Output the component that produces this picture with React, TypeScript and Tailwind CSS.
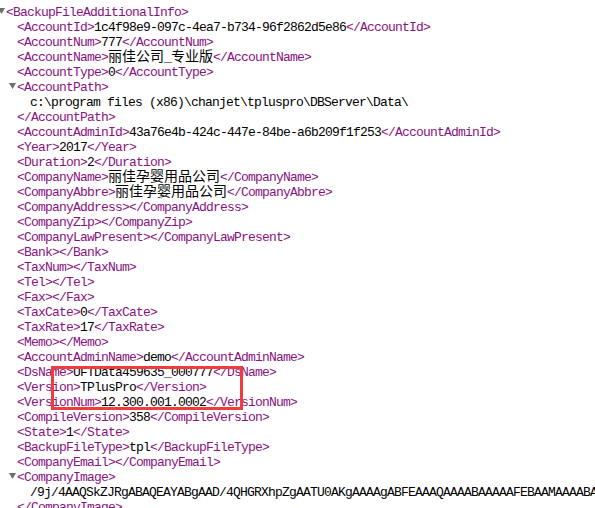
import React from "react";

type Seg = { t: string; k: "tag" | "txt" | "cjk" };
type Line = { indent: number; tri?: boolean; segs: Seg[] };

const tag = (t: string): Seg => ({ t, k: "tag" });
const txt = (t: string): Seg => ({ t, k: "txt" });
const cjk = (t: string): Seg => ({ t, k: "cjk" });

const el = (name: string, ...content: Seg[]): Line => ({
  indent: 17,
  segs: [tag(`<${name}>`), ...content, tag(`</${name}>`)],
});

const lines: Line[] = [
  { indent: 6, tri: true, segs: [tag("<BackupFileAdditionalInfo>")] },
  el("AccountId", txt("1c4f98e9-097c-4ea7-b734-96f2862d5e86")),
  el("AccountNum", txt("777")),
  el("AccountName", cjk("丽佳公司"), txt("_"), cjk("专业版")),
  el("AccountType", txt("0")),
  { indent: 17, tri: true, segs: [tag("<AccountPath>")] },
  { indent: 30, segs: [txt("c:\\program files (x86)\\chanjet\\tpluspro\\DBServer\\Data\\")] },
  { indent: 17, segs: [tag("</AccountPath>")] },
  el("AccountAdminId", txt("43a76e4b-424c-447e-84be-a6b209f1f253")),
  el("Year", txt("2017")),
  el("Duration", txt("2")),
  el("CompanyName", cjk("丽佳孕婴用品公司")),
  el("CompanyAbbre", cjk("丽佳孕婴用品公司")),
  el("CompanyAddress"),
  el("CompanyZip"),
  el("CompanyLawPresent"),
  el("Bank"),
  el("TaxNum"),
  el("Tel"),
  el("Fax"),
  el("TaxCate", txt("0")),
  el("TaxRate", txt("17")),
  el("Memo"),
  el("AccountAdminName", txt("demo")),
  el("DsName", txt("UFTData459635_000777")),
  el("Version", txt("TPlusPro")),
  el("VersionNum", txt("12.300.001.0002")),
  el("CompileVersion", txt("358")),
  el("State", txt("1")),
  el("BackupFileType", txt("tpl")),
  el("CompanyEmail"),
  { indent: 17, tri: true, segs: [tag("<CompanyImage>")] },
  {
    indent: 30,
    segs: [
      txt(
        "/9j/4AAQSkZJRgABAQEAYABgAAD/4QHGRXhpZgAATU0AKgAAAAgABFEAAAQAAAABAAAAAFEBAAMAAAABAAEAAFECAAEAAAGAAAAASlEDAAEAAAABAAAAAAAAAAAA"
      ),
    ],
  },
  { indent: 17, segs: [tag("</CompanyImage>")] },
];

function Triangle() {
  return (
    <svg
      className="absolute top-[5px] left-[-8px]"
      width="7"
      height="6"
      viewBox="0 0 7 6"
    >
      <polygon points="0,0 7,0 3.5,6" fill="#6e6e6e" />
    </svg>
  );
}

export default function App() {
  return (
    <div className="relative w-[595px] h-[508px] overflow-hidden bg-white pt-[3px]">
      {lines.map((ln, i) => (
        <div
          key={i}
          className="h-[15px] leading-[15px] whitespace-pre"
          style={{ paddingLeft: ln.indent }}
        >
          <span className="relative inline-block">
            {ln.tri && <Triangle />}
            {ln.segs.map((s, j) =>
              s.k === "cjk" ? (
                <span
                  key={j}
                  className="text-[14px] leading-[15px] text-black font-['Noto_Sans_CJK_SC',sans-serif]"
                >
                  {s.t}
                </span>
              ) : (
                <span
                  key={j}
                  className={`text-[13px] leading-[15px] tracking-[-0.8px] font-['Liberation_Mono',monospace] ${
                    s.k === "tag" ? "text-[#881280]" : "text-black"
                  }`}
                >
                  {s.t}
                </span>
              )
            )}
          </span>
        </div>
      ))}
      <div className="absolute left-[51px] top-[366px] w-[192px] h-[44px] border-[3px] border-[#f03c3c]" />
    </div>
  );
}
